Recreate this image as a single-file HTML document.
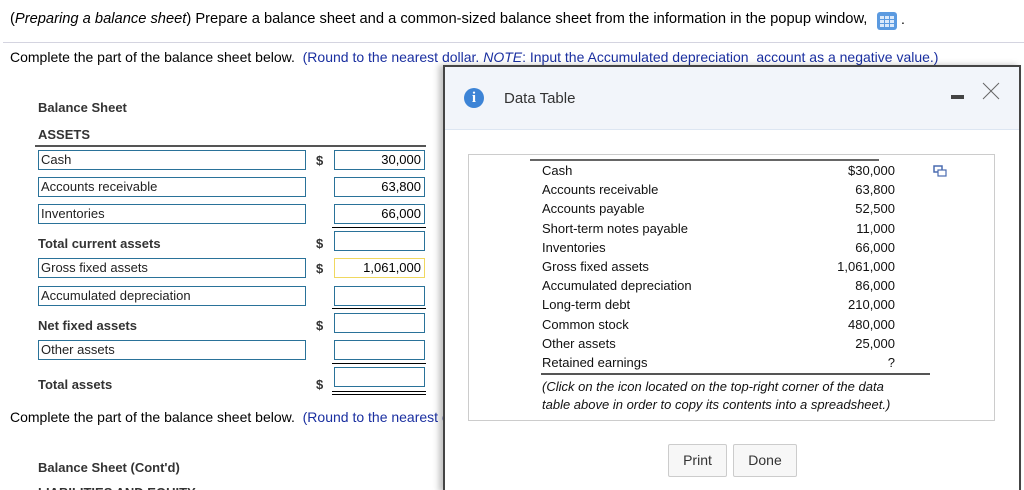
<!DOCTYPE html><html><head><style>
html,body{margin:0;padding:0;width:1024px;height:490px;overflow:hidden;background:#fff}
#w{position:relative;width:1024px;height:490px;overflow:hidden;font-family:"Liberation Sans",Arial,sans-serif;color:#000}
.a{position:absolute;white-space:nowrap}
.t{font-size:14px}
.blue{color:#1a2fa0}
.lab{position:absolute;left:38px;width:264px;height:18px;border:1px solid #2a7299;font-size:13px;line-height:18px;padding-left:2px;color:#222;box-sizing:content-box}
.val{position:absolute;left:334px;width:86px;height:18px;border:1px solid #2a7299;font-size:13px;line-height:18px;text-align:right;padding-right:3px}
.b{font-weight:bold;font-size:13px;color:#333}
.d{font-weight:bold;font-size:13px;color:#333;left:316px}
.ln{position:absolute;left:332px;width:94px;border-top:1px solid #000}
.r{position:absolute;font-size:13px;color:#111}
</style></head><body><div id="w">
<div class="a" style="left:10px;top:11px;font-size:14.7px">(<i>Preparing a balance sheet</i>) Prepare a balance sheet and a common-sized balance sheet from the information in the popup window,</div>
<div class="a" style="left:877px;top:12px;width:20px;height:18px;background:#5b9ae0;border-radius:3px"><svg width="20" height="18"><g fill="#dbe9fa"><rect x="3" y="4" width="4" height="3"/><rect x="8" y="4" width="4" height="3"/><rect x="13" y="4" width="4" height="3"/><rect x="3" y="8" width="4" height="3"/><rect x="8" y="8" width="4" height="3"/><rect x="13" y="8" width="4" height="3"/><rect x="3" y="12" width="4" height="3"/><rect x="8" y="12" width="4" height="3"/><rect x="13" y="12" width="4" height="3"/></g></svg></div>
<div class="a t" style="left:901px;top:11px">.</div>
<div class="a" style="left:3px;top:42px;width:1021px;border-top:1px solid #d4d4e0"></div>
<div class="a t" style="left:10px;top:49px">Complete the part of the balance sheet below. &nbsp;<span class="blue">(Round to the nearest dollar. <i>NOTE</i>: Input the Accumulated depreciation &nbsp;account as a negative value.)</span></div>

<div class="a b" style="left:38px;top:100px">Balance Sheet</div>
<div class="a b" style="left:38px;top:127px">ASSETS</div>
<div class="a" style="left:35px;top:145px;width:391px;border-top:2px solid #555"></div>
<div class="lab" style="top:150px">Cash</div><div class="a d" style="top:153px">$</div><div class="val" style="top:150px">30,000</div>
<div class="lab" style="top:177px">Accounts receivable</div><div class="val" style="top:177px">63,800</div>
<div class="lab" style="top:204px">Inventories</div><div class="val" style="top:204px">66,000</div>
<div class="ln" style="top:227px"></div>
<div class="a b" style="left:38px;top:236px">Total current assets</div><div class="a d" style="top:236px">$</div><div class="val" style="top:231px"></div>
<div class="lab" style="top:258px">Gross fixed assets</div><div class="a d" style="top:261px">$</div><div class="val" style="top:258px;border-color:#f0d860">1,061,000</div>
<div class="lab" style="top:286px">Accumulated depreciation</div><div class="val" style="top:286px"></div>
<div class="ln" style="top:308px"></div>
<div class="a b" style="left:38px;top:318px">Net fixed assets</div><div class="a d" style="top:318px">$</div><div class="val" style="top:313px"></div>
<div class="lab" style="top:340px">Other assets</div><div class="val" style="top:340px"></div>
<div class="ln" style="top:363px"></div>
<div class="a b" style="left:38px;top:377px">Total assets</div><div class="a d" style="top:377px">$</div><div class="val" style="top:367px"></div>
<div class="ln" style="top:391px"></div><div class="ln" style="top:394px"></div>
<div class="a t" style="left:10px;top:409px">Complete the part of the balance sheet below. &nbsp;<span class="blue">(Round to the nearest dollar.</span></div>
<div class="a b" style="left:38px;top:460px">Balance Sheet (Cont'd)</div>
<div class="a b" style="left:38px;top:480px;height:10px;overflow:hidden;line-height:15px;padding-top:5px;box-sizing:border-box">LIABILITIES AND EQUITY</div>

<div class="a" style="left:443px;top:65px;width:574px;height:425px;background:#fff;border:2px solid #444;border-bottom:none;box-shadow:-4px 0 6px rgba(0,0,0,.25)">
<div style="height:62px;background:#f2f5fa;border-bottom:1px solid #dde6f2"></div>
</div>
<div class="a" style="left:464px;top:88px;width:20px;height:20px;border-radius:50%;background:#3d84d6;color:#fff;font-weight:bold;font-family:'Liberation Serif',serif;font-size:15px;text-align:center;line-height:20px">i</div>
<div class="a" style="left:504px;top:90px;font-size:15px;color:#333">Data Table</div>
<div class="a" style="left:951px;top:95px;width:13px;height:4px;background:#444"></div>
<svg class="a" style="left:982px;top:82px" width="18" height="18"><path d="M1 1L17 17M17 1L1 17" stroke="#666" stroke-width="1"/></svg>
<div class="a" style="left:468px;top:154px;width:525px;height:265px;border:1px solid #ccc"></div>
<div class="a" style="left:530px;top:159px;width:349px;border-top:2px solid #666"></div>
<svg class="a" style="left:933px;top:165px" width="14" height="12"><rect x="1" y="1" width="8" height="6" fill="none" stroke="#4a6bb0" stroke-width="1.5"/><rect x="5" y="5" width="8" height="6" fill="#fff" stroke="#4a6bb0" stroke-width="1.2"/></svg>
<div class="r" style="left:542px;top:161px;line-height:19.2px">Cash<br>Accounts receivable<br>Accounts payable<br>Short-term notes payable<br>Inventories<br>Gross fixed assets<br>Accumulated depreciation<br>Long-term debt<br>Common stock<br>Other assets<br>Retained earnings</div>
<div class="r" style="left:795px;width:100px;text-align:right;top:161px;line-height:19.2px">$30,000<br>63,800<br>52,500<br>11,000<br>66,000<br>1,061,000<br>86,000<br>210,000<br>480,000<br>25,000<br>?</div>
<div class="a" style="left:541px;top:373px;width:389px;border-top:2px solid #555"></div>
<div class="r blue" style="left:542px;top:378px;line-height:17.5px;font-style:italic">(Click on the icon located on the top-right corner of the data<br>table above in order to copy its contents into a spreadsheet.)</div>
<div class="a" style="left:668px;top:444px;width:57px;height:31px;border:1px solid #ccc;border-radius:2px;background:#f7f7f7;font-size:14px;color:#333;text-align:center;line-height:31px">Print</div>
<div class="a" style="left:733px;top:444px;width:62px;height:31px;border:1px solid #ccc;border-radius:2px;background:#f7f7f7;font-size:14px;color:#333;text-align:center;line-height:31px">Done</div>
</div></body></html>
